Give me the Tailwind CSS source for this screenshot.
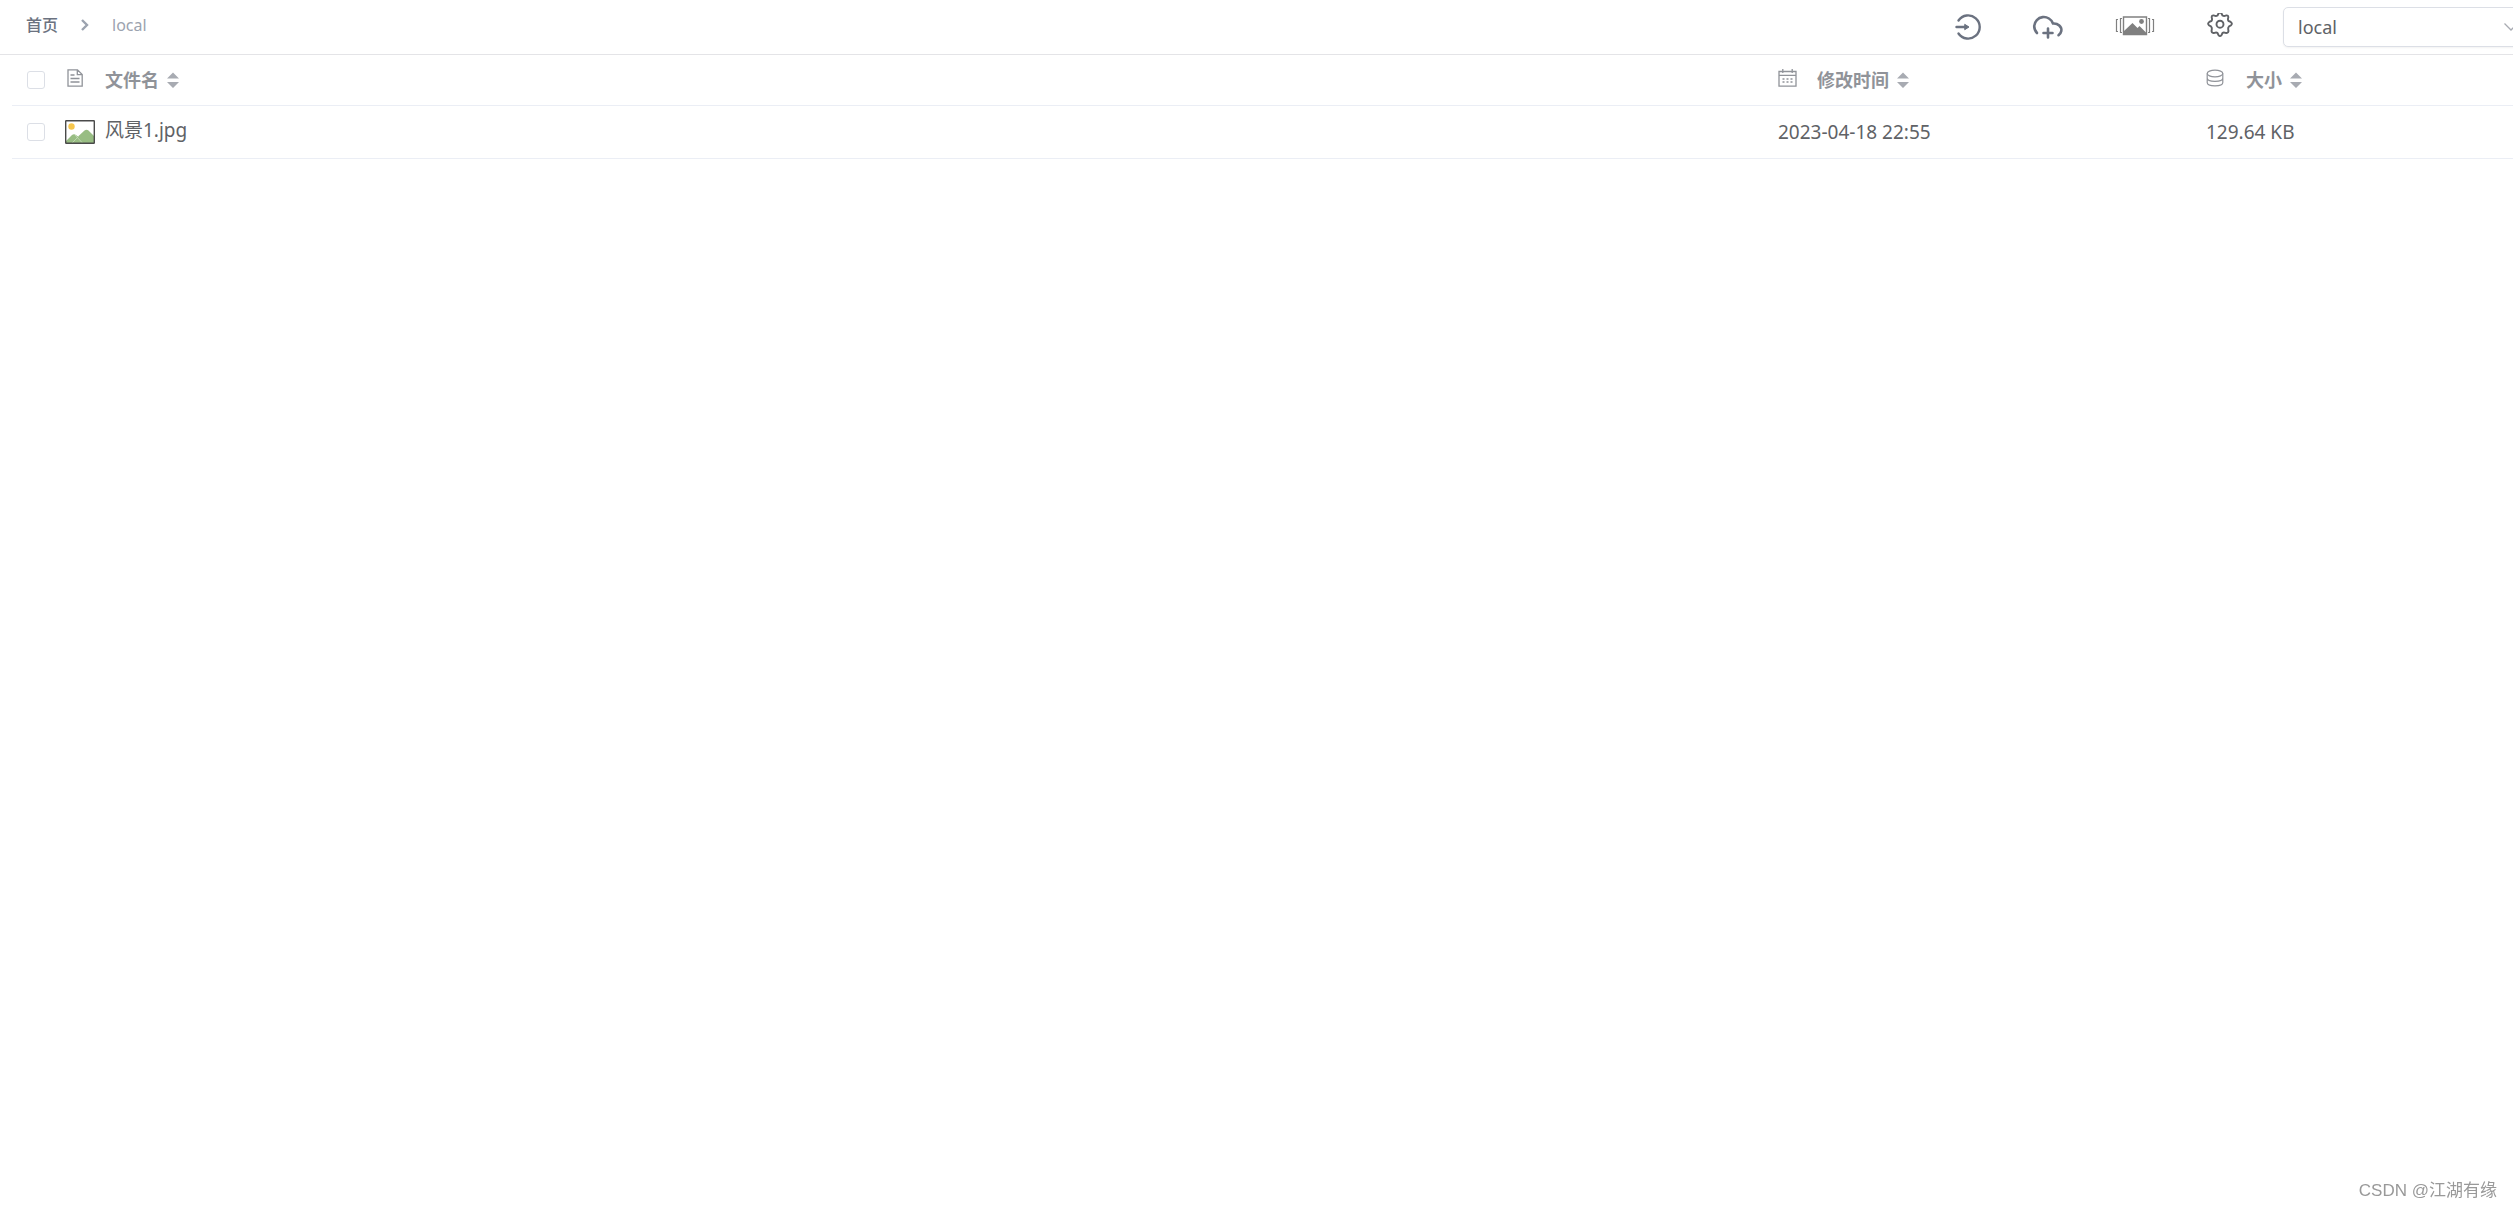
<!DOCTYPE html>
<html lang="zh-CN">
  <head>
    <meta charset="UTF-8">
    <meta name="viewport" content="width=device-width, initial-scale=1.0">
    <title>local</title>
    <script src="https://cdn.jsdelivr.net/npm/@tailwindcss/browser@4"></script>
  </head>
  <body class="min-h-screen overflow-x-hidden bg-white text-[#606266] font-['Noto_Sans','Noto_Sans_CJK_SC',sans-serif]">
    <header class="flex h-[55px] items-center overflow-hidden border-b border-[#e4e4e7] pl-[26px]">
      <nav class="flex items-center text-base leading-6 -mt-1" aria-label="路径">
        <a href="#" class="font-medium text-[#6b7280]">首页</a>
        <svg class="mx-[23px] h-3 w-2 text-[#9ca3af]" viewBox="0 0 8 12" fill="none" stroke="currentColor" stroke-width="2.4"><path d="M1 1l5 5-5 5"/></svg>
        <a href="#" class="text-[#9ca3af]">local</a>
      </nav>

      <div class="ml-auto flex shrink-0 items-center">
        <button aria-label="登录" class="mr-[50px] text-[#6b7280]">
          <svg class="h-7 w-7" viewBox="0 0 28 28" fill="none" stroke="currentColor" stroke-width="2.4" stroke-linecap="round"><path d="M4.5 7.5a11.6 11.6 0 1 1 0 13M2.5 14h10"/><path d="M11 11.5l4 2.5-4 2.5z" fill="currentColor" stroke-width="1"/></svg>
        </button>
        <button aria-label="上传" class="mr-[51px] text-[#6b7280]">
          <svg class="h-7 w-8" viewBox="0 0 32 28" fill="none" stroke="currentColor" stroke-width="2.6" stroke-linecap="round" stroke-linejoin="round"><path d="M5 20C3 18 2.2 15.5 2.2 13A9.7 9.7 0 0 1 21 10.5C26 10 30 14 29.3 18C29 20 28 21 26.5 22.2M16 15.5v9M11.5 20h9"/></svg>
        </button>
        <button aria-label="图片模式" class="mr-[51px] text-[#808080]">
          <svg class="h-7 w-10" viewBox="0 1 40 28" fill="none" stroke="currentColor"><path d="M8.5 5h23v17.5h-23z" stroke-width="1.4"/><path d="M9 22v-3l8.5-8 5 5 2-2 6.5 6.5V22z" fill="currentColor" stroke="none"/><circle cx="26.5" cy="9.5" r="2.4" fill="currentColor" stroke="none"/><path d="M7 6.5H5.5v14H7M3 7.5H1.5v12H3M33 6.5h1.5v14H33M37 7.5h1.5v12H37" stroke-width="1.2"/></svg>
        </button>
        <button aria-label="设置" class="mr-[49px] text-[#606266]">
          <svg class="h-7 w-7" viewBox="0 2 28 28" fill="none" stroke="currentColor" stroke-width="1.9" stroke-linejoin="round"><path d="M12.5 2.5Q14 .5 15.5 2.5L16.5 4.5Q18 5.5 20 4.5Q22.5 4 22.3 6.5Q21.5 8.5 22.5 10Q24.5 10.5 25.3 11.5Q26.5 13 25 14.3Q22.8 15 22.3 16.5Q22 18 22.5 20Q22 22.5 19.5 21.8Q17.5 21 16.5 22L15.5 24.2Q14 26 12.5 24.2L11.5 22Q10.5 21 8.5 21.8Q6 22.5 5.5 20Q6 18 5.7 16.5Q5.2 15 3 14.3Q1.5 13 2.7 11.5Q3.5 10.5 5.5 10Q6.5 8.5 5.7 6.5Q5.5 4 8 4.5Q10 5.5 11.5 4.5Z"/><circle cx="14" cy="13.2" r="3.5"/></svg>
        </button>
        <div class="relative -mr-[10px] w-60">
          <select aria-label="驱动器" class="block h-10 w-full appearance-none rounded-[5px] border border-[#dcdfe6] bg-white px-[14px] text-lg text-[#606266] shadow-xs outline-none">
            <option>local</option>
          </select>
          <svg class="pointer-events-none absolute right-1 top-[14px] h-3 w-4 text-[#a8abb2]" viewBox="0 0 16 12" fill="none" stroke="currentColor" stroke-width="1.3"><path d="M1.5 2.5L8 9l6.5-6.5"/></svg>
        </div>
      </div>
    </header>

    <main class="pl-3">
      <table class="w-full table-fixed text-left text-lg leading-6">
        <colgroup>
          <col class="w-[50px]">
          <col>
          <col class="w-[428px]">
          <col class="w-[319px]">
        </colgroup>
        <thead class="text-[#909399]">
          <tr class="h-[50px] border-b border-[#ebeef5]">
            <th class="pl-[15px]"><input type="checkbox" aria-label="全选" class="block h-[18px] w-[18px] appearance-none rounded-[3px] border border-[#dcdfe6] bg-white"></th>
            <th>
              <div class="flex items-center pl-[5px]">
                <svg class="mr-[22px] -mt-1 h-[18px] w-4" viewBox="0 0 16 18" fill="none" stroke="currentColor" stroke-width="1.3"><path d="M1 .8h9.5L15.2 5.5v11.7H1zM10.3 1v4.7H15M3.5 6h4M3.5 9.5h9M3.5 13h9"/></svg>
                <span>文件名</span>
                <button aria-label="按文件名排序" class="ml-2"><svg class="h-4 w-3" viewBox="0 0 12 16" fill="#a8abb2"><path d="M0 6.5L6 .5l6 6zM0 10l6 6 6-6z"/></svg></button>
              </div>
            </th>
            <th>
              <div class="flex items-center pl-3">
                <svg class="mr-5 -mt-1 h-[18px] w-[19px]" viewBox="0 0 19 18" fill="none" stroke="currentColor" stroke-width="1.3"><path d="M1 2.5h17v14.7H1zM1 6.3h17M4.8 0v4M14.2 0v4"/><path d="M4.5 10H15M4.5 13H15" stroke-dasharray="2 2"/></svg>
                <span>修改时间</span>
                <button aria-label="按修改时间排序" class="ml-2"><svg class="h-4 w-3" viewBox="0 0 12 16" fill="#a8abb2"><path d="M0 6.5L6 .5l6 6zM0 10l6 6 6-6z"/></svg></button>
              </div>
            </th>
            <th>
              <div class="flex items-center pl-3">
                <svg class="mr-[22px] -mt-1 h-[18px] w-[18px]" viewBox="0 0 18 18" fill="none" stroke="currentColor" stroke-width="1.2"><ellipse cx="9" cy="4.5" rx="7.8" ry="3.3"/><path d="M1.2 4.5v9c0 4.4 15.6 4.4 15.6 0v-9M1.2 9c0 4.4 15.6 4.4 15.6 0"/></svg>
                <span>大小</span>
                <button aria-label="按大小排序" class="ml-2"><svg class="h-4 w-3" viewBox="0 0 12 16" fill="#a8abb2"><path d="M0 6.5L6 .5l6 6zM0 10l6 6 6-6z"/></svg></button>
              </div>
            </th>
          </tr>
        </thead>
        <tbody class="text-[19px]">
          <tr class="h-[53px] border-b border-[#ebeef5]">
            <td class="pl-[15px]"><input type="checkbox" aria-label="选择 风景1.jpg" class="block h-[18px] w-[18px] appearance-none rounded-[3px] border border-[#dcdfe6] bg-white"></td>
            <td>
              <a href="#" class="flex items-center pl-[3px]">
                <svg class="mr-[10px] h-6 w-[30px]" viewBox="0 0 30 24"><path d="M.7.7h28.6v22.6H.7z" fill="#fff"/><circle cx="6.5" cy="6.5" r="3.2" fill="#f6c64d"/><path d="M1 21l6-6q2-1.5 4 0l2 1.5 6.5-6q2-1.5 4 0L29 16v7H1z" fill="#98bd83"/><path d="M10 15l7.5 8M13.5 16.5L7 23" fill="none" stroke="#c6dcb9" stroke-width=".8"/><rect x=".7" y=".7" width="28.6" height="22.6" rx=".5" fill="none" stroke="#4a4a4a" stroke-width="1.4"/></svg>
                <span class="-mt-1">风景1.jpg</span>
              </a>
            </td>
            <td class="pl-3">2023-04-18 22:55</td>
            <td class="pl-3">129.64 KB</td>
          </tr>
        </tbody>
      </table>
    </main>

    <footer class="fixed right-4 bottom-[5px] text-[17px] leading-6 text-[#999] font-['Liberation_Sans','Noto_Sans_CJK_SC',sans-serif]">CSDN @江湖有缘</footer>
  </body>
</html>
